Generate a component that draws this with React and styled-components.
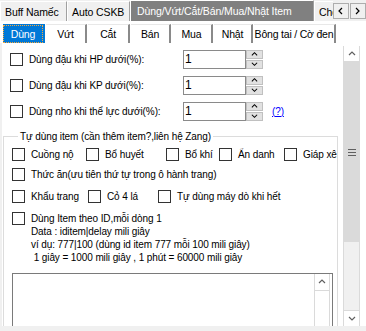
import styled, { createGlobalStyle } from 'styled-components';

const GlobalStyle = createGlobalStyle`
  html, body {
    margin: 0;
    padding: 0;
  }
  body {
    font-family: 'Liberation Sans', Arial, sans-serif;
    font-size: 10px;
    letter-spacing: -0.1px;
    color: #000;
    background: #f0f0f0;
  }
  * {
    box-sizing: border-box;
  }
`;

const Window = styled.div`
  width: 366px;
  height: 331px;
  overflow: hidden;
  display: flex;
  flex-direction: column;
  background: #f0f0f0;
`;

const TopBar = styled.div`
  display: flex;
  height: 21px;
  flex-shrink: 0;
`;

const TopTabs = styled.div`
  flex: 1;
  min-width: 0;
  display: flex;
  align-items: flex-end;
  overflow: hidden;
`;

const TopTab = styled.div`
  flex: 0 0 ${(p) => p.w}px;
  height: ${(p) => (p.active ? 21 : 20)}px;
  display: flex;
  align-items: center;
  padding-left: ${(p) => (p.active ? 6 : 4)}px;
  font-size: 10.5px;
  white-space: nowrap;
  overflow: hidden;
  background: ${(p) => (p.active ? '#808080' : '#f0f0f0')};
  color: ${(p) => (p.active ? '#fff' : '#000')};
  border-top: 1px solid #fff;
  border-left: 1px solid #fff;
  border-right: 1px solid #a0a0a0;
`;

const ArrowButtons = styled.div`
  display: flex;
  gap: 1px;
  padding-top: 3px;
`;

const ArrowButton = styled.div`
  width: 16px;
  height: 16px;
  display: flex;
  align-items: center;
  justify-content: center;
  background: #f0f0f0;
  border: 1px solid #adadad;
`;

const SubTabs = styled.div`
  display: flex;
  align-items: flex-end;
  height: 22px;
  flex-shrink: 0;
  padding-left: 3px;
  background: #fff;
`;

const SubTab = styled.div`
  flex: 0 0 ${(p) => p.w}px;
  height: 19px;
  margin-right: 1px;
  display: flex;
  align-items: center;
  justify-content: center;
  font-size: 10.5px;
  letter-spacing: -0.2px;
  white-space: nowrap;
  background: ${(p) => (p.active ? '#0078d7' : '#fff')};
  color: ${(p) => (p.active ? '#fff' : '#000')};
  border-right: 2px solid ${(p) => (p.active ? '#0078d7' : '#8a8a8a')};
  border-top: 1px solid ${(p) => (p.active ? '#0078d7' : '#e8e8e8')};
`;

const FocusText = styled.span`
  padding: 1px 6px;
  outline: 1px dotted #f6a93b;
  outline-offset: 1px;
`;

const Body = styled.div`
  flex: 1;
  min-height: 0;
  display: flex;
  background: #fff;
  border-left: 2px solid #f0f0f0;
`;

const Main = styled.div`
  flex: 1;
  min-width: 0;
  overflow: hidden;
  padding-top: 3px;
  display: flex;
  flex-direction: column;

  > * {
    flex-shrink: 0;
  }
`;

const SettingRow = styled.div`
  height: 26px;
  display: flex;
  align-items: center;
  padding-left: 8px;
`;

const Check = styled.span`
  width: 13px;
  height: 13px;
  flex-shrink: 0;
  background: #fff;
  border: 1px solid #333;
`;

const Label = styled.span`
  white-space: pre;
  margin-left: 6px;
`;

const SettingLabel = styled(Label)`
  width: 154px;
`;

const NumberBox = styled.div`
  display: flex;
  height: 19px;
`;

const NumberInput = styled.div`
  width: 63px;
  height: 19px;
  border: 1px solid #8a8a8a;
  font-size: 12px;
  line-height: 17px;
  padding-left: 1px;
`;

const Spinner = styled.div`
  width: 17px;
  display: flex;
  flex-direction: column;
  gap: 1px;
`;

const SpinButton = styled.div`
  flex: 1;
  display: flex;
  align-items: center;
  justify-content: center;
  background: #e1e1e1;
  border: 1px solid #c0c0c0;
`;

const HelpLink = styled.a`
  margin-left: 9px;
  color: #0000ff;
  text-decoration: underline;
`;

const GroupBox = styled.fieldset`
  margin: 6px 0 0 1px;
  width: 334px;
  padding: 1px 0 0 8px;
  border: 1px solid #dcdcdc;
  min-height: 200px;
  display: flex;
  flex-direction: column;

  > * {
    flex-shrink: 0;
  }
`;

const Legend = styled.legend`
  margin-left: 6px;
  padding: 0 2px;
  line-height: 13px;
  white-space: nowrap;
`;

const ItemRow = styled.div`
  height: ${(p) => p.h}px;
  display: flex;
  align-items: center;
  white-space: nowrap;
  overflow: hidden;
`;

const Item = styled.div`
  display: flex;
  align-items: center;
  flex: 0 0 ${(p) => (p.w ? `${p.w}px` : 'auto')};
`;

const IdBlock = styled.div`
  display: flex;
  align-items: flex-start;
  margin-top: 5px;
`;

const IdText = styled.div`
  margin-left: 6px;
  line-height: 13px;
  white-space: pre;
`;

const TextBox = styled.div`
  margin-top: 9px;
  width: 321px;
  height: 90px;
  border: 1px solid #7a7a7a;
  display: flex;
  justify-content: flex-end;
  padding-right: 2px;
`;

const InnerScroll = styled.div`
  width: 16px;
  border-left: 1px solid #dadada;
  border-right: 1px solid #dadada;
`;

const ScrollArrow = styled.div`
  height: ${(p) => p.h || 16}px;
  flex-shrink: 0;
  display: flex;
  align-items: center;
  justify-content: center;
  background: #fff;
  border-bottom: ${(p) => (p.bottom ? 'none' : '1px solid #dadada')};
  border-top: ${(p) => (p.bottom ? '1px solid #dadada' : 'none')};
`;

const ScrollColumn = styled.div`
  width: 17px;
  margin-top: 3px;
  margin-right: 6px;
  display: flex;
  flex-direction: column;
  border-left: 1px solid #dadada;
  border-right: 1px solid #dadada;
`;

const Thumb = styled.div`
  height: 180px;
  flex-shrink: 0;
  background: #dadada;
  display: flex;
  align-items: center;
  justify-content: center;
`;

const Track = styled.div`
  flex: 1;
  background: #f0f0f0;
`;

const BottomStrip = styled.div`
  height: 5px;
  flex-shrink: 0;
  background: #f0f0f0;
`;

const Chevron = ({ dir = 'up', size = 7, color = '#606060' }) => {
  const paths = {
    up: 'M1 5 L4 2 L7 5',
    down: 'M1 2 L4 5 L7 2',
    left: 'M5 1 L2 4 L5 7',
    right: 'M2 1 L5 4 L2 7',
  };
  return (
    <svg width={size + 1} height={size + 1} viewBox="0 0 8 8">
      <path d={paths[dir]} fill="none" stroke={color} strokeWidth="1.2" />
    </svg>
  );
};

const Grip = () => (
  <svg width="8" height="7" viewBox="0 0 8 7">
    <path d="M0 0.5 H8 M0 3.5 H8 M0 6.5 H8" stroke="#606060" strokeWidth="1" />
  </svg>
);

const settings = [
  'Dùng đậu khi HP dưới(%):',
  'Dùng đậu khi KP dưới(%):',
  'Dùng nho khi thể lực dưới(%):',
];

const subTabs = [
  { label: 'Dùng', w: 42, active: true },
  { label: 'Vứt', w: 41 },
  { label: 'Cắt', w: 42 },
  { label: 'Bán', w: 40 },
  { label: 'Mua', w: 41 },
  { label: 'Nhật', w: 39 },
  { label: 'Bông tai / Cờ đen', w: 82 },
];

const App = () => {
  return (
    <Window>
      <GlobalStyle />
      <TopBar>
        <TopTabs>
          <TopTab w={67}>Buff Namếc</TopTab>
          <TopTab w={63}>Auto CSKB</TopTab>
          <TopTab w={184} active>
            Dùng/Vứt/Cắt/Bán/Mua/Nhật Item
          </TopTab>
          <TopTab w={40}>Cho đồ</TopTab>
        </TopTabs>
        <ArrowButtons>
          <ArrowButton>
            <Chevron dir="left" color="#000" />
          </ArrowButton>
          <ArrowButton>
            <Chevron dir="right" color="#000" />
          </ArrowButton>
        </ArrowButtons>
      </TopBar>

      <SubTabs>
        {subTabs.map((t) => (
          <SubTab key={t.label} w={t.w} active={t.active}>
            {t.active ? <FocusText>{t.label}</FocusText> : t.label}
          </SubTab>
        ))}
      </SubTabs>

      <Body>
        <Main>
          {settings.map((label, i) => (
            <SettingRow key={label}>
              <Check />
              <SettingLabel>{label}</SettingLabel>
              <NumberBox>
                <NumberInput>1</NumberInput>
                <Spinner>
                  <SpinButton>
                    <Chevron dir="up" size={6} color="#000" />
                  </SpinButton>
                  <SpinButton>
                    <Chevron dir="down" size={6} color="#000" />
                  </SpinButton>
                </Spinner>
              </NumberBox>
              {i === 2 && <HelpLink>(?)</HelpLink>}
            </SettingRow>
          ))}

          <GroupBox>
            <Legend>Tự dùng item (cần thêm item?,liên hệ Zang)</Legend>
            <ItemRow h={20}>
              <Item w={74}>
                <Check />
                <Label>Cuồng nộ</Label>
              </Item>
              <Item w={80}>
                <Check />
                <Label>Bổ huyết</Label>
              </Item>
              <Item w={53}>
                <Check />
                <Label>Bổ khí</Label>
              </Item>
              <Item w={65}>
                <Check />
                <Label>Ẩn danh</Label>
              </Item>
              <Item>
                <Check />
                <Label>Giáp xê</Label>
              </Item>
            </ItemRow>
            <ItemRow h={21}>
              <Check />
              <Label>Thức ăn(ưu tiên thứ tự trong ô hành trang)</Label>
            </ItemRow>
            <ItemRow h={22}>
              <Item w={76}>
                <Check />
                <Label>Khẩu trang</Label>
              </Item>
              <Item w={70}>
                <Check />
                <Label>Cỏ 4 lá</Label>
              </Item>
              <Item>
                <Check />
                <Label>Tự dùng máy dò khi hết</Label>
              </Item>
            </ItemRow>
            <IdBlock>
              <Check />
              <IdText>
                {'Dùng Item theo ID,mỗi dòng 1\n' +
                  'Data : iditem|delay mili giây\n' +
                  'ví dụ: 777|100 (dùng id item 777 mỗi 100 mili giây)\n' +
                  ' 1 giây = 1000 mili giây , 1 phút = 60000 mili giây'}
              </IdText>
            </IdBlock>
            <TextBox>
              <InnerScroll>
                <ScrollArrow h={17}>
                  <Chevron dir="up" />
                </ScrollArrow>
              </InnerScroll>
            </TextBox>
          </GroupBox>
        </Main>

        <ScrollColumn>
          <ScrollArrow h={16}>
            <Chevron dir="up" />
          </ScrollArrow>
          <Thumb>
            <Grip />
          </Thumb>
          <Track />
          <ScrollArrow h={16} bottom>
            <Chevron dir="down" />
          </ScrollArrow>
        </ScrollColumn>
      </Body>
      <BottomStrip />
    </Window>
  );
};

export default App;
